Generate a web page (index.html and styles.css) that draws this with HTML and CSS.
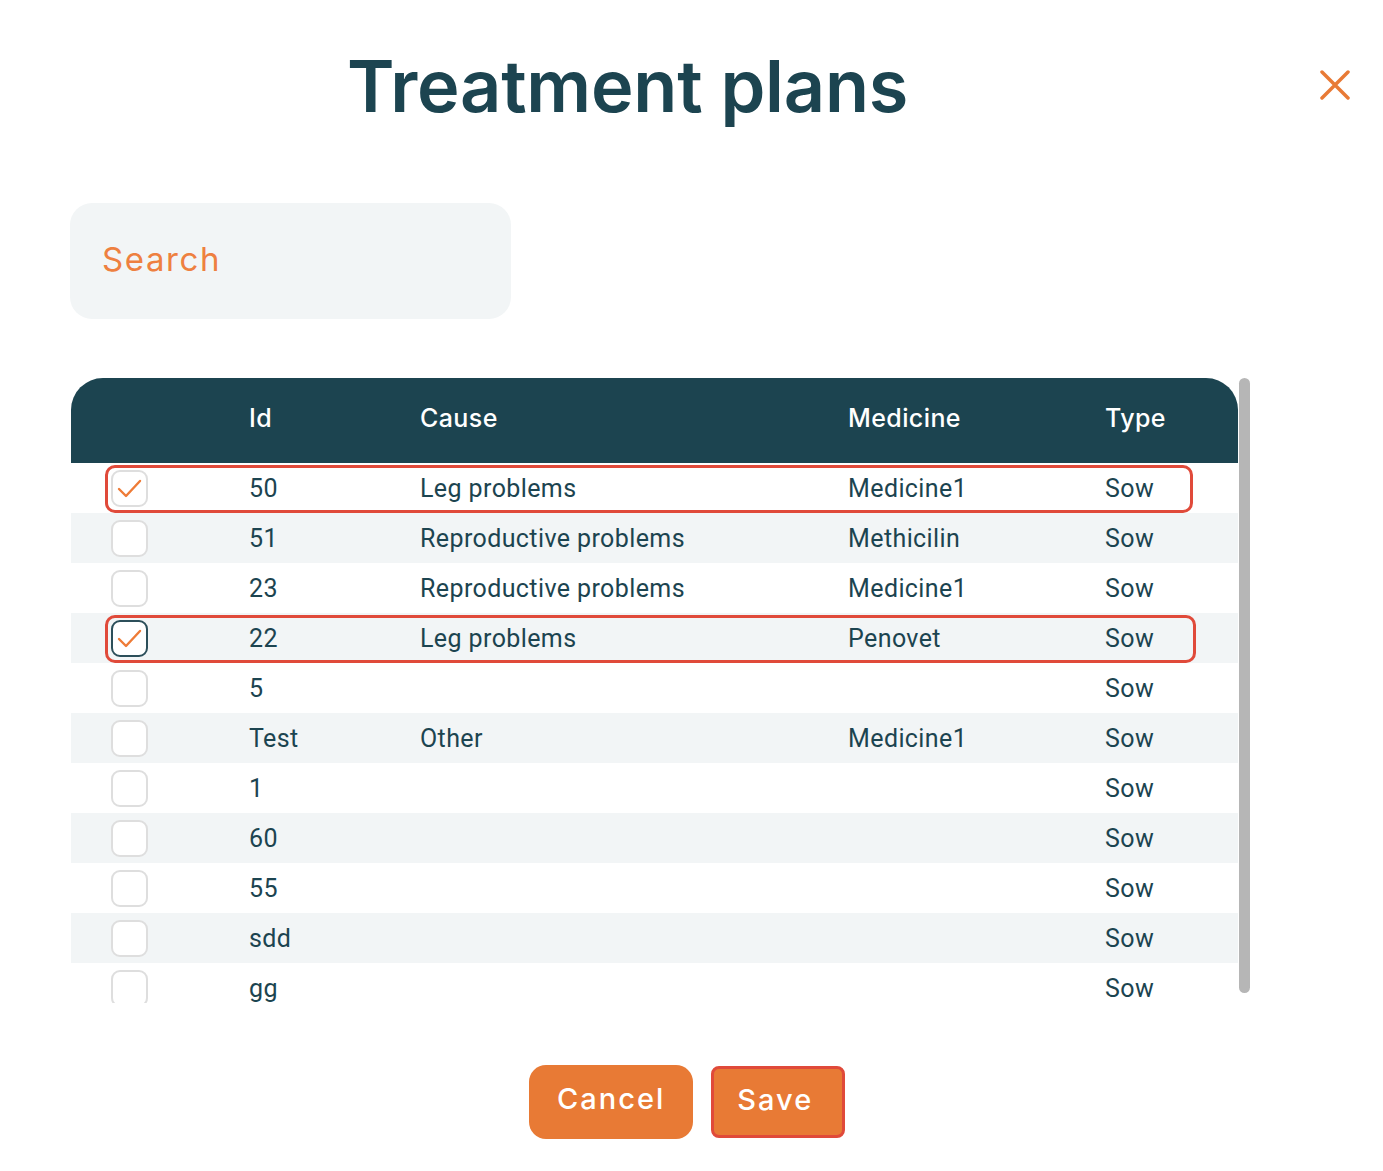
FILE: index.html
```html
<!DOCTYPE html>
<html lang="en">
<head>
    <meta charset="UTF-8">
    <meta name="viewport" content="width=device-width, initial-scale=1.0">
    <title>Treatment plans</title>
    <link rel="stylesheet" href="styles.css">
</head>
<body>
    <div class="modal">
        <div class="modal-top">
            <h1 class="modal-title">Treatment plans</h1>
            <button type="button" class="modal-close" aria-label="Close">
                <svg viewBox="0 0 30 30" width="30" height="30">
                    <path d="M2 2 L28 28 M28 2 L2 28" stroke="#e87a35" stroke-width="3.5" stroke-linecap="round" fill="none"/>
                </svg>
            </button>
        </div>

        <div class="search">
            <input type="text" class="search-input" placeholder="Search" aria-label="Search">
        </div>

        <div class="table-area">
            <div class="table-scroll">
                <div class="row head">
                    <span></span>
                    <span>Id</span>
                    <span>Cause</span>
                    <span>Medicine</span>
                    <span>Type</span>
                </div>
                <div class="row marked first">
                    <span><i class="box checked"></i></span>
                    <span>50</span>
                    <span>Leg problems</span>
                    <span>Medicine1</span>
                    <span>Sow</span>
                </div>
                <div class="row">
                    <span><i class="box"></i></span>
                    <span>51</span>
                    <span>Reproductive problems</span>
                    <span>Methicilin</span>
                    <span>Sow</span>
                </div>
                <div class="row">
                    <span><i class="box"></i></span>
                    <span>23</span>
                    <span>Reproductive problems</span>
                    <span>Medicine1</span>
                    <span>Sow</span>
                </div>
                <div class="row marked">
                    <span><i class="box checked focused"></i></span>
                    <span>22</span>
                    <span>Leg problems</span>
                    <span>Penovet</span>
                    <span>Sow</span>
                </div>
                <div class="row">
                    <span><i class="box"></i></span>
                    <span>5</span>
                    <span></span>
                    <span></span>
                    <span>Sow</span>
                </div>
                <div class="row">
                    <span><i class="box"></i></span>
                    <span>Test</span>
                    <span>Other</span>
                    <span>Medicine1</span>
                    <span>Sow</span>
                </div>
                <div class="row">
                    <span><i class="box"></i></span>
                    <span>1</span>
                    <span></span>
                    <span></span>
                    <span>Sow</span>
                </div>
                <div class="row">
                    <span><i class="box"></i></span>
                    <span>60</span>
                    <span></span>
                    <span></span>
                    <span>Sow</span>
                </div>
                <div class="row">
                    <span><i class="box"></i></span>
                    <span>55</span>
                    <span></span>
                    <span></span>
                    <span>Sow</span>
                </div>
                <div class="row">
                    <span><i class="box"></i></span>
                    <span>sdd</span>
                    <span></span>
                    <span></span>
                    <span>Sow</span>
                </div>
                <div class="row">
                    <span><i class="box"></i></span>
                    <span>gg</span>
                    <span></span>
                    <span></span>
                    <span>Sow</span>
                </div>
            </div>
            <div class="scrollbar"></div>
        </div>

        <div class="actions">
            <button type="button" class="btn">Cancel</button>
            <button type="button" class="btn btn-save">Save</button>
        </div>
    </div>
</body>
</html>
```

FILE: styles.css
```css
body {
    margin: 0;
    background-color: #fff;
    font-family: "Inter", "Liberation Sans", sans-serif;
    color: #1c4450;
}

.modal {
    width: 1383px;
}

.modal-top {
    display: flex;
    align-items: center;
    height: 170px;
}

.modal-title {
    width: 1255px;
    margin: 0;
    text-align: center;
    font-size: 72px;
    font-weight: 600;
    letter-spacing: -0.2px;
    color: #1c4450;
}

.modal-close {
    margin-left: 65px;
    padding: 0;
    border: none;
    background: none;
    width: 30px;
    height: 30px;
    cursor: pointer;
}

.search {
    margin: 33px 0 0 70px;
}

.search-input {
    box-sizing: border-box;
    width: 441px;
    height: 116px;
    padding: 0 32px 4px;
    border: none;
    border-radius: 22px;
    background-color: #f2f5f6;
    font-family: "Inter", sans-serif;
    font-size: 33px;
    letter-spacing: 1.6px;
    outline: none;
}

.search-input::placeholder {
    color: #ee8040;
}

.table-area {
    display: flex;
    margin: 59px 0 0 71px;
}

.table-scroll {
    width: 1167px;
    height: 625px;
    overflow: hidden;
}

.scrollbar {
    width: 11px;
    height: 615px;
    margin-left: 1px;
    border-radius: 6px;
    background-color: #b6b6b6;
}

.row {
    display: grid;
    grid-template-columns: 178px 171px 428px 257px 1fr;
    align-items: center;
    height: 50px;
    font-family: "Roboto", sans-serif;
    font-size: 25px;
    letter-spacing: 0.4px;
    color: #1c4450;
    position: relative;
}

.row:nth-child(odd) {
    background-color: #f2f5f6;
}

.row.head {
    box-sizing: border-box;
    height: 85px;
    padding-bottom: 6px;
    background-color: #1c4450;
    border-radius: 32px 32px 0 0;
    font-family: "Inter", sans-serif;
    font-size: 25px;
    font-weight: 500;
    letter-spacing: 0.4px;
    color: #fff;
}

.box {
    display: block;
    box-sizing: border-box;
    width: 37px;
    height: 37px;
    margin-left: 40px;
    border: 2px solid #dedede;
    border-radius: 9px;
    background-color: #fff;
}

.box.checked {
    background: #fff url("data:image/svg+xml,%3Csvg xmlns='http://www.w3.org/2000/svg' viewBox='0 0 33 33'%3E%3Cpath d='M6 17 L13 24 L27 9' stroke='%23ee7b37' stroke-width='2.4' fill='none' stroke-linecap='round' stroke-linejoin='round'/%3E%3C/svg%3E") center/100% no-repeat;
}

.box.focused {
    border-color: #2c4f5a;
}

.row.marked::after {
    content: "";
    position: absolute;
    left: 34px;
    right: 42px;
    top: 2px;
    bottom: 0;
    border: 3px solid #e04a3a;
    border-radius: 10px;
}

.row.marked.first::after {
    right: 45px;
}

.actions {
    display: flex;
    gap: 18px;
    margin: 62px 0 0 529px;
}

.btn {
    height: 74px;
    padding: 0 28px 8px;
    border: none;
    border-radius: 17px;
    background-color: #e87a35;
    color: #fff;
    font-family: "Inter", sans-serif;
    font-size: 29px;
    font-weight: 500;
    letter-spacing: 2px;
    cursor: pointer;
}

.btn-save {
    box-sizing: border-box;
    width: 134px;
    height: 72px;
    margin-top: 1px;
    padding: 0 6px 6px 0;
    border: 3px solid #e04a3a;
    border-radius: 8px;
}
```
